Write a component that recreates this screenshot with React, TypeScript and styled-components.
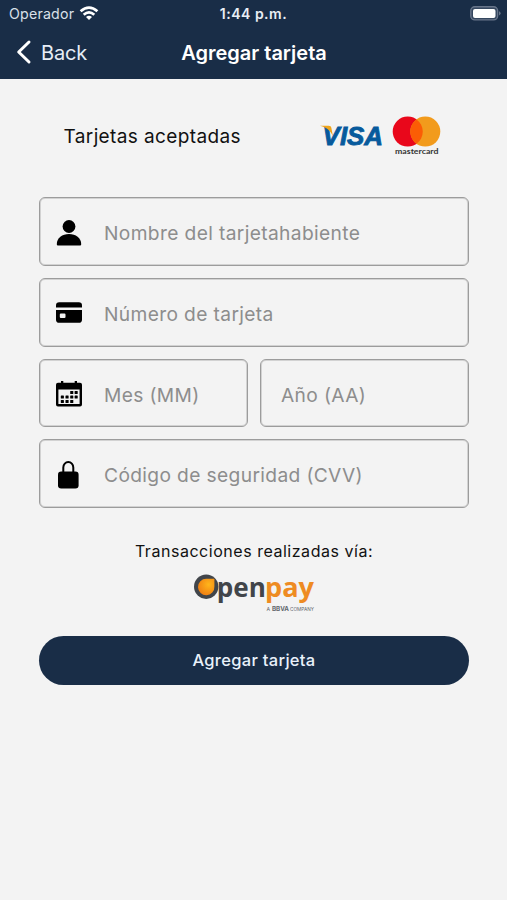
import React from "react";
import styled, { createGlobalStyle } from "styled-components";

const GlobalStyle = createGlobalStyle`
  *, *::before, *::after { box-sizing: border-box; }
  body { margin: 0; background: #f3f3f3; font-family: Inter, "Liberation Sans", sans-serif; }
`;

const Screen = styled.div`
  width: 507px;
  height: 900px;
  overflow: hidden;
  background: #f3f3f3;
`;

const Header = styled.header`
  height: 79px;
  background: #192d47;
  color: #fff;
`;

const Bar = styled.div<{ $height: number }>`
  height: ${(p) => p.$height}px;
  display: grid;
  grid-template-columns: 1fr auto 1fr;
  align-items: center;
  white-space: nowrap;
`;

const BarStart = styled.div<{ $inset: number; $gap: number }>`
  display: flex;
  align-items: center;
  gap: ${(p) => p.$gap}px;
  padding-left: ${(p) => p.$inset}px;
`;

const BarEnd = styled.div`
  display: flex;
  justify-content: flex-end;
  padding-right: 6px;
`;

const Carrier = styled.span`
  font-size: 14.2px;
  letter-spacing: 0.2px;
  color: #d9e0e9;
`;

const Clock = styled.span`
  font-size: 14px;
  font-weight: 600;
  letter-spacing: 0.5px;
  color: #e9eef5;
`;

const BackLabel = styled.span`
  font-size: 20px;
  line-height: 24px;
  letter-spacing: -0.15px;
  padding-top: 1px;
  color: #e6edf6;
`;

const Title = styled.h1`
  margin: 0;
  padding: 1px 0 0 1px;
  font-size: 20px;
  line-height: 24px;
  font-weight: 600;
`;

const Content = styled.main`
  display: flex;
  flex-direction: column;
  padding: 32px 38px 0 39px;
`;

const AcceptedRow = styled.div`
  height: 50px;
  display: flex;
  align-items: center;
  justify-content: space-between;
  padding: 0 28px 0 24.5px;
`;

const AcceptedLabel = styled.span`
  font-size: 19px;
  letter-spacing: 0.38px;
  color: #111;
`;

const Brands = styled.div`
  display: flex;
  align-items: center;
  gap: 8px;
`;

const Form = styled.form`
  display: flex;
  flex-direction: column;
  gap: 12px;
  margin-top: 36.3px;
`;

const FieldRow = styled.div`
  display: grid;
  grid-template-columns: minmax(0, 1fr) minmax(0, 1fr);
  gap: 12px;
`;

const Field = styled.label`
  height: 68.7px;
  display: flex;
  align-items: center;
  gap: 21px;
  padding: 2px 15px 0 15px;
  border: 1px solid #9c9c9c;
  box-shadow: inset 0 0 0 1px #d2d2d2;
  border-radius: 6px;
`;

const Input = styled.input<{ $inset?: number }>`
  flex: 1;
  min-width: 0;
  border: 0;
  outline: 0;
  padding: 1px 0 0 ${(p) => p.$inset ?? 0}px;
  background: transparent;
  font-family: inherit;
  font-size: 19.2px;
  letter-spacing: 0.36px;
  &::placeholder { color: #8d8d8d; opacity: 1; }
`;

const Provider = styled.div`
  display: flex;
  flex-direction: column;
  align-items: center;
  gap: 11px;
  margin-top: 32px;
`;

const ProviderLabel = styled.span`
  font-size: 16px;
  line-height: 22px;
  letter-spacing: 0.53px;
  color: #111;
`;

const Submit = styled.button`
  height: 49px;
  margin-top: 21px;
  padding-bottom: 2px;
  border: 0;
  border-radius: 25px;
  background: #192d47;
  color: #e9f1fa;
  font-family: inherit;
  font-size: 16.5px;
  font-weight: 500;
  letter-spacing: 0.3px;
`;

const Drawing = styled.svg`
  display: block;
  flex: none;
  overflow: visible;
`;

const WifiIcon = () => (
  <Drawing width="20" height="16" viewBox="0 0 20 16" fill="none" stroke="#fff" strokeWidth="2.8">
    <path d="M1.6 5.2Q10-2 18.4 5.2" />
    <path d="M4.7 8.7Q10 4.1 15.3 8.7" />
    <path d="M10 14L7 11.1Q10 8.4 13 11.1Z" fill="#fff" stroke="none" />
  </Drawing>
);

const BatteryIcon = () => (
  <Drawing width="31" height="16" viewBox="0 0 31 16">
    <rect x="0.8" y="0.7" width="26.8" height="13.2" rx="4" fill="#35475f" stroke="#68758a" strokeWidth="1.4" />
    <rect x="3" y="2.9" width="22.5" height="9" rx="2" fill="#fff" />
    <path d="M29 5.2q1.6.6 1.6 2.1T29 9.4z" fill="#68758a" />
  </Drawing>
);

const ChevronIcon = () => (
  <Drawing width="15" height="24" viewBox="0 0 15 24" fill="none" stroke="#fff" strokeWidth="3" strokeLinecap="round" strokeLinejoin="round">
    <path d="M13 2L2.7 12l10.3 10" />
  </Drawing>
);

const VisaLogo = () => (
  <Drawing width="64" height="30" viewBox="0 0 64 30">
    <text x="2.6" y="23.8" fontFamily="Liberation Sans, sans-serif" fontWeight="700" fontStyle="italic" fontSize="26.5" textLength="60.5" lengthAdjust="spacingAndGlyphs" fill="#075a9c" stroke="#075a9c" strokeWidth="0.9">VISA</text>
    <path d="M0 4.8h8.6c1.8 0 2.5.8 2.8 2.2l1.5 8.2C10.7 9.8 6.6 6.4 0 4.8z" fill="#efa51c" />
  </Drawing>
);

const MastercardLogo = () => (
  <Drawing width="49" height="42" viewBox="0 0 49 42">
    <circle cx="15.7" cy="16.6" r="15" fill="#e9071b" />
    <circle cx="33.3" cy="16.6" r="15" fill="#f29b1c" />
    <path d="M24.5 4.4a15 15 0 0 1 0 24.4 15 15 0 0 1 0-24.4z" fill="#fb5d05" />
    <text x="3" y="38.8" fontFamily="Lato, sans-serif" fontSize="8.2" fontWeight="700" textLength="43.5" lengthAdjust="spacingAndGlyphs" fill="#333">mastercard</text>
  </Drawing>
);

const PersonIcon = () => (
  <Drawing width="28" height="28" viewBox="0 0 28 28">
    <circle cx="14" cy="7.5" r="6.4" />
    <path d="M1.8 25c0-6 5.5-10 12.2-10s12.2 4 12.2 10c0 1-.5 1.6-1.5 1.6H3.3c-1 0-1.5-.6-1.5-1.6z" />
  </Drawing>
);

const CardIcon = () => (
  <Drawing width="28" height="28" viewBox="0 0 28 28">
    <path d="M1 8.5V6.3Q1 3.2 4.2 3.2h19.6q3.2 0 3.2 3.1v2.2z" />
    <path fillRule="evenodd" d="M1 11h26v9.7q0 3.1-3.2 3.1H4.2Q1 23.8 1 20.7zM5.8 14.5q-1 0-1 1v2.4q0 1 1 1h3.7q1 0 1-1v-2.4q0-1-1-1z" />
  </Drawing>
);

const dots = [
  [15.2, 11.7], [19.6, 11.7],
  [5.8, 16.2], [10.5, 16.2], [15.2, 16.2], [19.6, 16.2],
  [5.8, 20.8], [10.5, 20.8], [15.2, 20.8],
];

const CalendarIcon = () => (
  <Drawing width="28" height="28" viewBox="0 0 28 28">
    <path fillRule="evenodd" d="M3 2.7h3V.9h2.3v1.8h11.4V.9H22v1.8h3q2 0 2 2v19.8q0 2-2 2H3q-2 0-2-2V4.7q0-2 2-2zM3.4 9.5v14.6h21.2V9.5z" />
    {dots.map(([x, y]) => <rect key={`${x}-${y}`} x={x} y={y - 0.8} width="3.1" height="3" rx="0.5" />)}
  </Drawing>
);

const LockIcon = () => (
  <Drawing width="28" height="28" viewBox="0 0 28 28">
    <path d="M8.3 12V6.5a5 5.4 0 0 1 10 0V12" fill="none" stroke="#000" strokeWidth="2" />
    <rect x="3" y="10.6" width="20.6" height="16.8" rx="3.2" />
  </Drawing>
);

const OpenpayLogo = () => (
  <Drawing width="122" height="42" viewBox="0 0 122 42">
    <defs>
      <radialGradient id="drop" cx=".65" cy=".35" r=".75">
        <stop offset="0" stopColor="#ffb51b" />
        <stop offset="1" stopColor="#ef7c12" />
      </radialGradient>
    </defs>
    <circle cx="13.2" cy="13.7" r="12.2" fill="#41454a" />
    <path d="M21.4 5.8v7.7a8.2 8.2 0 1 1-8.2-7.7z" fill="url(#drop)" />
    <g fontFamily="Open Sans, sans-serif" fontWeight="700" fontSize="26">
      <text x="23.8" y="24" textLength="49" lengthAdjust="spacingAndGlyphs" fill="#41454a">pen</text>
      <text x="72" y="24" textLength="49" lengthAdjust="spacingAndGlyphs" fill="#ee8b22">pay</text>
    </g>
    <g fontFamily="Inter, sans-serif" fontSize="5.2" fill="#62666c">
      <text x="73.5" y="37.7">A</text>
      <text x="79" y="37.7" fontWeight="700" fontSize="5.8" textLength="17" lengthAdjust="spacingAndGlyphs">BBVA</text>
      <text x="97" y="37.7" textLength="24" lengthAdjust="spacingAndGlyphs">COMPANY</text>
    </g>
  </Drawing>
);

export default function App() {
  return (
    <>
      <GlobalStyle />
      <Screen>
        <Header>
          <Bar $height={27}>
            <BarStart $inset={9} $gap={5}>
              <Carrier>Operador</Carrier>
              <WifiIcon />
            </BarStart>
            <Clock>1:44 p.m.</Clock>
            <BarEnd><BatteryIcon /></BarEnd>
          </Bar>
          <Bar $height={50}>
            <BarStart $inset={16} $gap={10}>
              <ChevronIcon />
              <BackLabel>Back</BackLabel>
            </BarStart>
            <Title>Agregar tarjeta</Title>
          </Bar>
        </Header>
        <Content>
          <AcceptedRow>
            <AcceptedLabel>Tarjetas aceptadas</AcceptedLabel>
            <Brands>
              <VisaLogo />
              <MastercardLogo />
            </Brands>
          </AcceptedRow>
          <Form>
            <Field><PersonIcon /><Input placeholder="Nombre del tarjetahabiente" /></Field>
            <Field><CardIcon /><Input placeholder="Número de tarjeta" /></Field>
            <FieldRow>
              <Field><CalendarIcon /><Input placeholder="Mes (MM)" /></Field>
              <Field><Input $inset={5} placeholder="Año (AA)" /></Field>
            </FieldRow>
            <Field><LockIcon /><Input placeholder="Código de seguridad (CVV)" /></Field>
          </Form>
          <Provider>
            <ProviderLabel>Transacciones realizadas vía:</ProviderLabel>
            <OpenpayLogo />
          </Provider>
          <Submit type="button">Agregar tarjeta</Submit>
        </Content>
      </Screen>
    </>
  );
}
